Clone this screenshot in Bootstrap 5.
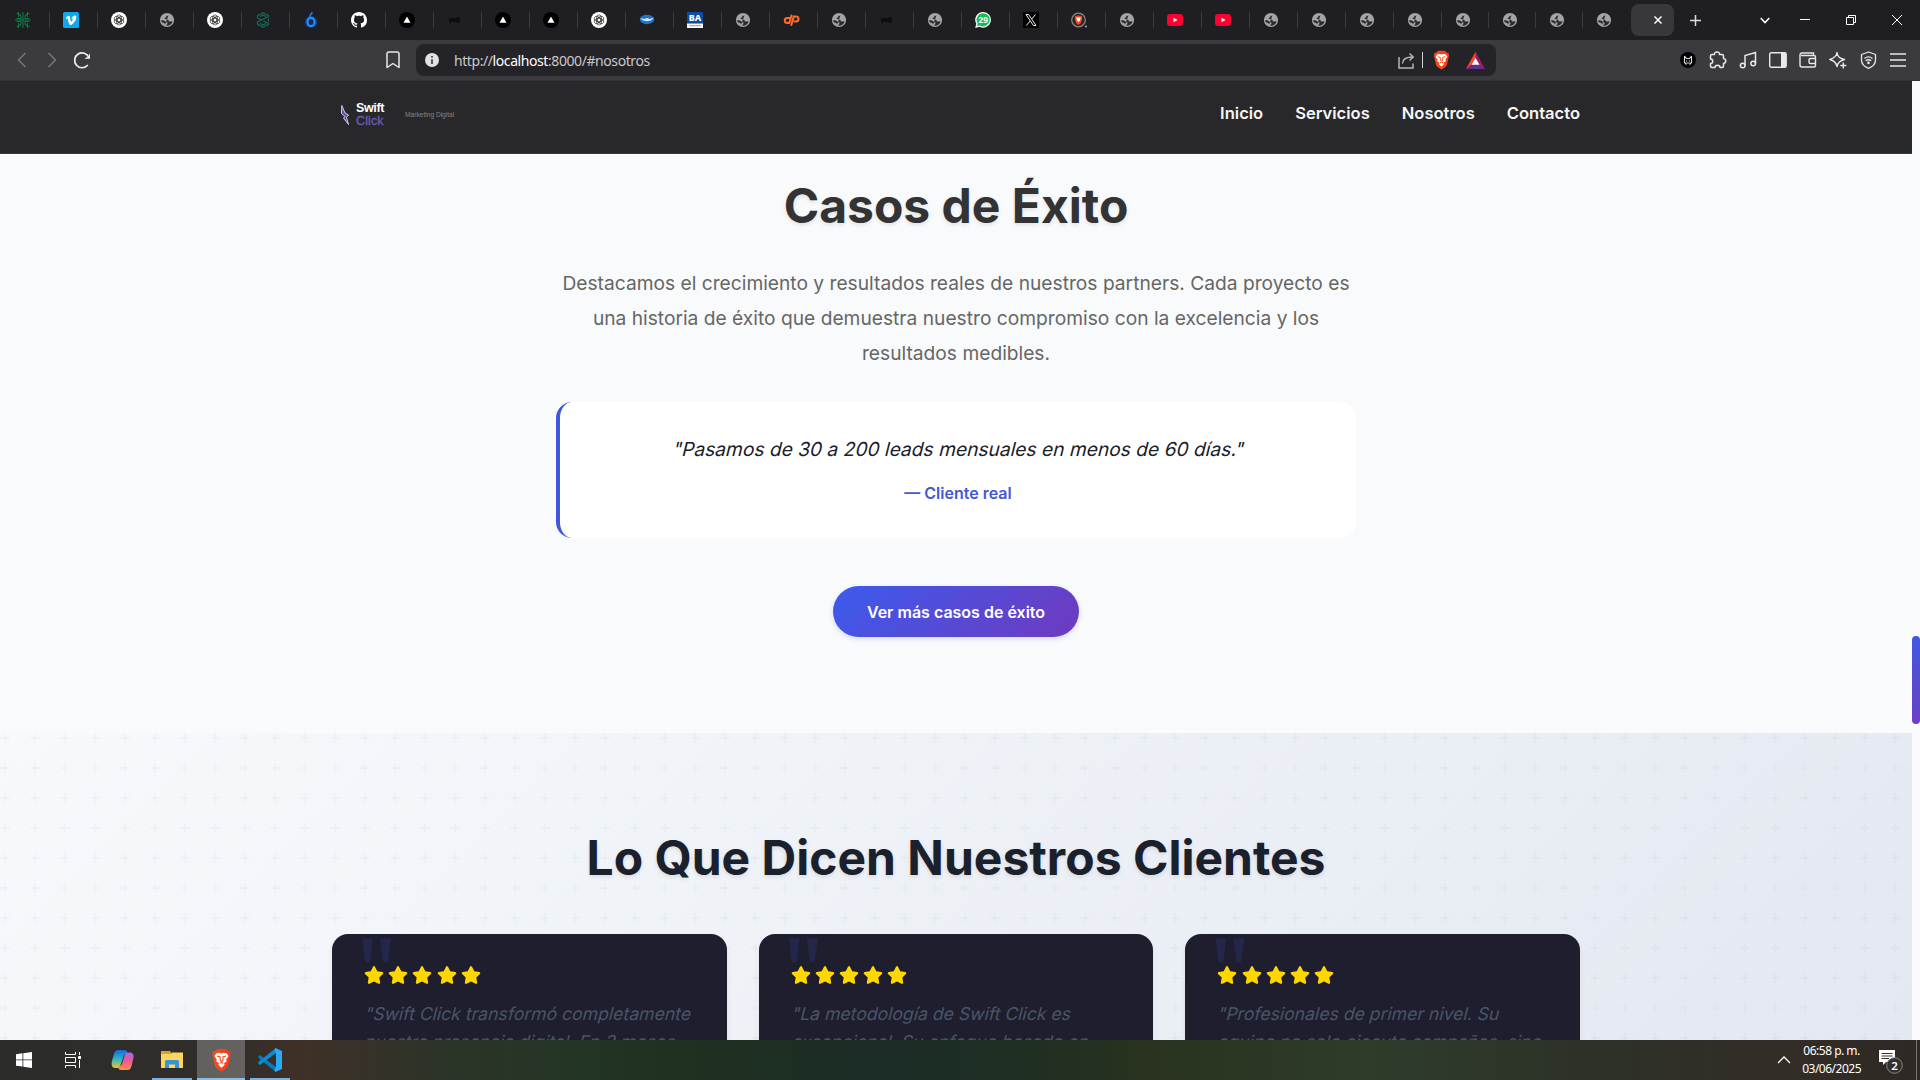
<!DOCTYPE html>
<html lang="es">
<head>
<meta charset="utf-8">
<title>Swift Click</title>
<link href="https://cdn.jsdelivr.net/npm/bootstrap@5.3.0/dist/css/bootstrap.min.css" rel="stylesheet">
<style>
body{width:1920px;height:1080px;overflow:hidden;font-family:Inter,sans-serif;background:#f8fafc}
svg{display:block;flex:none}
.tabstrip{height:40px;background:#1f1f23;padding-left:2px}
.tab-cell{width:48px;height:16px;padding-right:5px;border-right:1px solid #3a3a3e;flex:none}
.tab-cell.slim{width:47px}
.tab-cell.bare{border-color:transparent}
.tab-active{width:43px;height:32px;border-radius:8px;background:#38373c;padding-left:11px;margin-left:1px}
.win-ctl{width:46px}
.tab-list{margin-right:12px}
.toolbar{height:41px;background:#3b3a3f;border-bottom:1px solid #323236}
.tool-slot{width:30px}
.nav-tools{margin-left:7px}
.mark-slot{margin-left:281px}
.ext-tools{margin-right:7px}
.address{width:1080px;height:32px;margin-left:8px;border-radius:8px;background:#242328;font:14px "Noto Sans",sans-serif;letter-spacing:-.42px;color:#c9c9cc}
.address b{font-weight:400;color:#fff}
.info-dot{margin:0 15px 0 9px}
.addr-rule{margin:0 10px 0 7px}
.bat-icon{margin:0 11px 0 16px}
.site{height:959px}
.page{width:1912px;overflow:hidden}
.scroller{width:8px;padding-top:555px;background:#f8fafc}
.thumb{height:88px;border-radius:4px;background:linear-gradient(#4158e0,#6b3fc4)}
.site-head{height:73px;background:#28282a;border-bottom:1px solid #3c3c40;padding-bottom:8px}
.inner{width:1248px}
.brand{padding:3px 0 0 8px}
.brand-name{margin-left:6px;font:bold 12.5px/12.5px "Liberation Sans",sans-serif;color:#fff;letter-spacing:-.35px}
.brand-name span{color:#6c5db4;font-weight:400;letter-spacing:.1px;-webkit-text-stroke:.3px #6c5db4}
.brand-tag{font:6.6px/10px "Liberation Sans",sans-serif;color:#858588;margin-left:21px}
.site-nav{gap:32px;font-weight:600;color:#f5f5f5;font-size:16.56px}
.cases{height:579px;background:#f8fafb;padding-top:23px}
.big-title{font-size:48px;line-height:58px;font-weight:700;text-shadow:0 2px 4px rgba(0,0,0,.1)}
.cases .big-title{color:#333;margin-bottom:31px}
.intro{width:800px;font-size:19.2px;line-height:35px;color:#666;margin-bottom:31px}
.quote-box{width:800px;height:136px;border-left:4px solid #4056dd;border-radius:16px;background:#fff;padding-top:30px}
.quote-box p{font-size:19.2px;line-height:34px;color:#1a202c;margin-bottom:14px}
.slant{display:inline-block;transform:skewX(-14deg);transform-origin:0 70%}
.quote-box cite{font-style:normal;font-weight:600;color:#4657d4;line-height:26px}
.more-btn{width:246px;height:51px;margin-top:48px;border-radius:26px;font-weight:600;color:#fff;background:linear-gradient(135deg,#3b5bed,#6f3abf);box-shadow:0 2px 5px rgba(64,86,217,.2)}
.clients{height:307px;overflow:hidden;position:relative;background:linear-gradient(135deg,#f7fafc,#e3e8f1);padding-top:96px}
.crosses{position:absolute;inset:0}
.clients .big-title{color:#1a202c;margin-bottom:47px;position:relative}
.voices{gap:32px;position:relative}
.voice{flex:1;height:360px;border-radius:16px;background:#1e1e2e;padding:32px;position:relative;box-shadow:0 4px 6px rgba(0,0,0,.06)}
.voice::before{content:'"';position:absolute;left:25px;top:-12px;font:96px/96px "Liberation Serif",serif;color:#23274b;-webkit-text-stroke:1.5px #23274b}
.star-row{gap:4.2px;position:relative}
.voice p{font-size:17.6px;line-height:28.2px;color:#4a5568;margin:16px 0 0;white-space:nowrap}
.taskbar{height:40px;background:linear-gradient(90deg,#2c2d2a 0,#2f2d29 220px,#3f3027 300px,#2c3428 440px,#233525 580px,#1f2f20 700px,#1b2d27 880px,#202f22 1040px,#29331f 1150px,#2e3c2a 1370px,#2d3128 1600px,#332c26 1800px,#2e2925 1920px)}
.task-item{width:49px;height:40px}
.task-icon-left{margin-left:-2px}
.open-app{width:40px;margin-left:5px;box-shadow:inset 0 -2px #76b1e4}
.open-app.current{width:48px;background:rgba(255,255,255,.25);box-shadow:inset 0 -2px #86bdec}
.clock{font:12px/18px "Noto Sans",sans-serif;color:#fff;letter-spacing:-.5px}
.tray-up{margin-right:11px}
.notes{margin:0 13px 0 17px}
.desk-edge{margin-right:3px}
</style>
<script src="https://cdn.jsdelivr.net/npm/bootstrap@5.3.0/dist/js/bootstrap.bundle.min.js"></script>
</head>
<body>
<svg width="0" height="0" class="position-absolute">
<defs>
<linearGradient id="lionG" x1="0" x2="1"><stop offset="0" stop-color="#f4501f"/><stop offset="1" stop-color="#fb3a12"/></linearGradient>
<linearGradient id="coA" x1="0" y1="0" x2="0" y2="1"><stop offset="0" stop-color="#1b67d8"/><stop offset=".5" stop-color="#2bb6c9"/><stop offset="1" stop-color="#f2c230"/></linearGradient>
<linearGradient id="coB" x1="0" y1="0" x2="0" y2="1"><stop offset="0" stop-color="#b063e6"/><stop offset=".5" stop-color="#ec5a92"/><stop offset="1" stop-color="#fb923c"/></linearGradient>
<symbol id="globe" viewBox="0 0 16 16"><circle cx="8" cy="8" r="7.100" fill="#a2a4a7"/><path d="M9.800 2.300C9.800 3.600 8.900 3.700 7.800 4 7 4.300 7.400 5.300 6.500 5.700 5.500 6.100 5.200 6.800 6.200 7 8 7.300 9.300 7.300 9.500 8.500 9.700 9.600 10.500 9.400 11.300 9.400L13.600 9.200A5.800 5.800 0 0 1 7.300 13.700C7.300 12.500 8.600 12.400 8.500 11.200 8.400 9.900 6.800 10.200 5.900 9.200 5.300 8.400 4.300 8.300 2.200 8.300A5.900 5.900 0 0 0 2.600 10.200C4.500 10.200 5 11 5.800 11.800 6.300 12.400 5.800 13 5.800 13.400" fill="#2a2a2e"/></symbol>
<symbol id="gpt" viewBox="0 0 16 16"><circle cx="8" cy="8" r="8" fill="#fff"/><g fill="none" stroke="#3c3c3c" stroke-width=".75"><rect x="5.700" y="2.900" width="4.600" height="7.200" rx="2.300"/><rect x="5.700" y="2.900" width="4.600" height="7.200" rx="2.300" transform="rotate(60 8 8)"/><rect x="5.700" y="2.900" width="4.600" height="7.200" rx="2.300" transform="rotate(120 8 8)"/><rect x="5.700" y="2.900" width="4.600" height="7.200" rx="2.300" transform="rotate(180 8 8)"/><rect x="5.700" y="2.900" width="4.600" height="7.200" rx="2.300" transform="rotate(240 8 8)"/><rect x="5.700" y="2.900" width="4.600" height="7.200" rx="2.300" transform="rotate(300 8 8)"/></g></symbol>
<symbol id="vercel" viewBox="0 0 16 16"><circle cx="8" cy="8" r="8" fill="#000"/><path d="M8 4.500 11.500 10.800H4.500Z" fill="#fff"/></symbol>
<symbol id="yt" viewBox="0 0 16 16"><rect y="2" width="16" height="12" rx="3" fill="#ff0033"/><path d="M6.500 5.800 10.500 8 6.500 10.200Z" fill="#fff"/></symbol>
<symbol id="dim" viewBox="0 0 16 16"><path d="M2 6 3.500 10 5 6M6 10V6L7.500 9 9 6V10M13 6H10.500V10H13M10.500 8H13" fill="none" stroke="#0d0d0f" stroke-width="1.500"/></symbol>
<symbol id="lion" viewBox="0 0 20 24"><path d="M6 1H14L16 3 18.500 3.500 19 7 18.500 9 16.500 18C16 20 12 22 10 23.500 8 22 4 20 3.500 18L1.500 9 1 7 1.500 3.500 4 3Z" fill="url(#lionG)"/><path d="M5 5.200 8 4.800 10 5.400 12 4.800 15 5.200 17 8 14.700 11.500 15.200 13.500 12.600 15 13 17 10 19.800 7 17 7.400 15 4.800 13.500 5.300 11.500 3 8Z" fill="#fff"/><path d="M5.500 8 8.600 9V12.500L10 13.300 11.400 12.500V9L14.500 8M8.200 15.300 10 14.500 11.800 15.300" fill="none" stroke="#fa4218" stroke-width="1.100"/></symbol>
<symbol id="star" viewBox="0 0 576 512"><path fill="#ffd700" d="M259.300 17.800 194 150.200 47.900 171.500c-26.200 3.800-36.700 36.100-17.700 54.600l105.700 103-25 145.500c-4.500 26.300 23.200 46 46.400 33.700L288 439.600l130.700 68.700c23.200 12.200 50.900-7.400 46.400-33.700l-25-145.500 105.700-103c19-18.500 8.500-50.800-17.700-54.600L382 150.200 316.700 17.800c-11.700-23.600-45.600-23.900-57.400 0z"/></symbol>
</defs></svg>

<div class="tabstrip d-flex align-items-center">
<div class="tab-cell d-flex align-items-center justify-content-center"><svg width="16" height="16" viewBox="0 0 16 16" fill="none" stroke="#0c7a41" stroke-width="1.100"><path d="M8 0V16M1.500 1.500H3.500L6 4V6.500H1.500M14.500 1.500H12.500L10 4V6.500H14.500M0 8H16M1.500 14.500H3.500L6 12V9.500H1.500M14.500 14.500H12.500L10 12V9.500H14.500M3.500 0V5M12.500 0V5M3.500 16V11M12.500 16V11"/></svg></div>
<div class="tab-cell d-flex align-items-center justify-content-center"><svg width="16" height="16" viewBox="0 0 16 16"><rect width="16" height="16" rx="1.500" fill="#10a8ea"/><path d="M2.700 6C4.600 4 6.500 2.600 7 5.500 7.300 8 7.600 9.500 8.200 9.500 8.900 9.500 10.400 7 9.300 6.500L8.500 6.700C9 3.500 13.600 2 13.300 5.500 13 8.500 9.800 12.800 7.700 12.900 5.500 12.900 5.300 7.200 4.400 6.400L3.200 6.800Z" fill="#fff"/></svg></div>
<div class="tab-cell d-flex align-items-center justify-content-center"><svg width="16" height="16"><use href="#gpt"/></svg></div>
<div class="tab-cell d-flex align-items-center justify-content-center"><svg width="16" height="16"><use href="#globe"/></svg></div>
<div class="tab-cell d-flex align-items-center justify-content-center"><svg width="16" height="16"><use href="#gpt"/></svg></div>
<div class="tab-cell d-flex align-items-center justify-content-center"><svg width="16" height="16" viewBox="0 0 16 16" fill="none" stroke="#127358" stroke-width="1.200"><path d="M13.500 4.500V3.500L8 .8 2.500 3.500V6L13.500 11.500V12.500L8 15.200 2.500 12.500V11.500M13.500 4.500 2.500 10V11.500M5 4.500 8 3 11 4.500M5 11.500 8 13 11 11.500M13.500 6.500V9.500"/></svg></div>
<div class="tab-cell d-flex align-items-center justify-content-center"><svg width="16" height="16" viewBox="0 0 16 16"><circle cx="8" cy="10" r="6" fill="#0847a8"/><ellipse cx="8" cy="10" rx="3.500" ry="4" fill="#102c66" stroke="#2a9af5" stroke-width="1.800"/><path d="M6.500 6C7 3 8 1.500 9.500.5" stroke="#1478d4" stroke-width="2" fill="none"/></svg></div>
<div class="tab-cell d-flex align-items-center justify-content-center"><svg width="16" height="16" viewBox="0 0 16 16"><path fill="#fff" d="M8 0C3.580 0 0 3.580 0 8c0 3.540 2.290 6.530 5.470 7.590.4.070.55-.17.55-.38 0-.19-.01-.82-.01-1.490-2.010.37-2.530-.49-2.690-.94-.09-.23-.48-.94-.82-1.130-.28-.15-.68-.52-.01-.53.63-.01 1.080.58 1.230.82.72 1.210 1.870.87 2.330.66.070-.52.28-.87.51-1.070-1.780-.2-3.640-.89-3.640-3.950 0-.87.31-1.590.82-2.150-.08-.2-.36-1.020.08-2.120 0 0 .67-.21 2.200.82.640-.18 1.320-.27 2-.27s1.360.09 2 .27c1.530-1.040 2.200-.82 2.200-.82.440 1.100.16 1.920.08 2.120.51.56.82 1.270.82 2.150 0 3.070-1.870 3.750-3.650 3.950.29.25.54.73.54 1.480 0 1.070-.01 1.930-.01 2.200 0 .21.15.46.55.38A8 8 0 0 0 16 8c0-4.420-3.580-8-8-8"/></svg></div>
<div class="tab-cell d-flex align-items-center justify-content-center"><svg width="16" height="16"><use href="#vercel"/></svg></div>
<div class="tab-cell d-flex align-items-center justify-content-center"><svg width="16" height="16"><use href="#dim"/></svg></div>
<div class="tab-cell d-flex align-items-center justify-content-center"><svg width="16" height="16"><use href="#vercel"/></svg></div>
<div class="tab-cell d-flex align-items-center justify-content-center"><svg width="16" height="16"><use href="#vercel"/></svg></div>
<div class="tab-cell d-flex align-items-center justify-content-center"><svg width="16" height="16"><use href="#gpt"/></svg></div>
<div class="tab-cell d-flex align-items-center justify-content-center"><svg width="16" height="16" viewBox="0 0 16 16"><ellipse cx="8" cy="7.500" rx="7.200" ry="4.700" fill="#1f74c8"/><path d="M1 6 5 7 8 6 11 7 15 5.500 12 8.500 8 9.200 4 8.500Z" fill="#d6eafa"/></svg></div>
<div class="tab-cell d-flex align-items-center justify-content-center"><svg width="16" height="16" viewBox="0 0 16 16"><rect width="16" height="11.500" fill="#0a4da2"/><rect y="11.500" width="16" height="4.500" fill="#fff"/><path d="M2 13.700H14" stroke="#7a9fcc"/><text x="8" y="9" text-anchor="middle" font-family="Noto Sans" font-weight="800" font-size="9" fill="#fff">BA</text></svg></div>
<div class="tab-cell d-flex align-items-center justify-content-center"><svg width="16" height="16"><use href="#globe"/></svg></div>
<div class="tab-cell d-flex align-items-center justify-content-center"><svg width="17" height="16" viewBox="0 0 17 16" fill="none" stroke="#ff6a2b" stroke-width="2.100" stroke-linecap="round"><path d="M6.500 6H4.300A2.500 2.500 0 0 0 4.300 11H6.200L8.500 3.500M8.300 13 10.800 4.500H13A2.500 2.500 0 0 1 13 9.500H11.700"/></svg></div>
<div class="tab-cell d-flex align-items-center justify-content-center"><svg width="16" height="16"><use href="#globe"/></svg></div>
<div class="tab-cell d-flex align-items-center justify-content-center"><svg width="16" height="16"><use href="#dim"/></svg></div>
<div class="tab-cell d-flex align-items-center justify-content-center"><svg width="16" height="16"><use href="#globe"/></svg></div>
<div class="tab-cell d-flex align-items-center justify-content-center"><svg width="16" height="16" viewBox="0 0 16 16"><path d="M8.200 0A7.800 7.800 0 1 1 4.500 14.700L.2 16 1.300 11.700A7.800 7.800 0 0 1 8.200 0Z" fill="#fff"/><path d="M8.200 1.200A6.600 6.600 0 1 1 4.700 13.400L2 14.200 2.700 11.500A6.600 6.600 0 0 1 8.200 1.200Z" fill="#19bd54"/><text x="8.200" y="11" text-anchor="middle" font-family="Liberation Sans" font-size="8.500" font-weight="700" fill="#fff">29</text></svg></div>
<div class="tab-cell d-flex align-items-center justify-content-center"><svg width="16" height="16" viewBox="0 0 16 16"><rect width="16" height="16" fill="#000"/><path d="M3 2.500H5.600L13 13.500H10.400ZM12.500 2.500 8.700 7M7.200 9 3.300 13.500" fill="none" stroke="#eee"/></svg></div>
<div class="tab-cell d-flex align-items-center justify-content-center"><svg width="16" height="16" viewBox="0 0 16 16"><circle cx="7.500" cy="8" r="6.800" fill="#2a2422" stroke="#8b8581" stroke-width="1.300"/><path d="M4 4 7.500 3.500 11 4 11.200 7 10 11 7.500 13 5 11 3.800 7Z" fill="#ee4528"/><path d="M5.200 5.500H9.800L9 8.500 7.500 10 6 8.500Z" fill="#fff"/><circle cx="15" cy="14.500" r="1" fill="#aaa"/></svg></div>
<div class="tab-cell d-flex align-items-center justify-content-center"><svg width="16" height="16"><use href="#globe"/></svg></div>
<div class="tab-cell d-flex align-items-center justify-content-center"><svg width="16" height="16"><use href="#yt"/></svg></div>
<div class="tab-cell d-flex align-items-center justify-content-center"><svg width="16" height="16"><use href="#yt"/></svg></div>
<div class="tab-cell d-flex align-items-center justify-content-center"><svg width="16" height="16"><use href="#globe"/></svg></div>
<div class="tab-cell d-flex align-items-center justify-content-center"><svg width="16" height="16"><use href="#globe"/></svg></div>
<div class="tab-cell d-flex align-items-center justify-content-center"><svg width="16" height="16"><use href="#globe"/></svg></div>
<div class="tab-cell d-flex align-items-center justify-content-center"><svg width="16" height="16"><use href="#globe"/></svg></div>
<div class="tab-cell slim d-flex align-items-center justify-content-center"><svg width="16" height="16"><use href="#globe"/></svg></div>
<div class="tab-cell slim d-flex align-items-center justify-content-center"><svg width="16" height="16"><use href="#globe"/></svg></div>
<div class="tab-cell slim d-flex align-items-center justify-content-center"><svg width="16" height="16"><use href="#globe"/></svg></div>
<div class="tab-cell slim bare d-flex align-items-center justify-content-center"><svg width="16" height="16"><use href="#globe"/></svg></div>
<div class="tab-active d-flex align-items-center justify-content-center"><svg width="8" height="8" stroke="#fff" stroke-width="1.500"><path d="M.5.5 7.500 7.500M7.500.5.5 7.500"/></svg></div>
<svg class="ms-3" width="11" height="11" stroke="#ddd" stroke-width="1.500"><path d="M5.500 0V11M0 5.500H11"/></svg>
<div class="ms-auto d-flex align-items-center">
<svg class="tab-list" width="10" height="7" fill="none" stroke="#fff" stroke-width="1.600"><path d="M.7 1 5 5.500 9.300 1"/></svg>
<div class="win-ctl d-flex justify-content-center align-items-center"><svg width="10" height="10" stroke="#fff"><path d="M0 4.500H10"/></svg></div>
<div class="win-ctl d-flex justify-content-center"><svg width="10" height="10" fill="none" stroke="#fff"><path d="M.5 2.500H7.500V9.500H.5ZM2.500 2.500V.5H9.500V7.500H7.500"/></svg></div>
<div class="win-ctl d-flex justify-content-center"><svg width="10" height="10" stroke="#fff"><path d="M0 0 10 10M10 0 0 10"/></svg></div>
</div>
</div>

<div class="toolbar d-flex align-items-center">
<div class="nav-tools d-flex align-items-center">
<div class="tool-slot d-flex justify-content-center"><svg width="10" height="16" fill="none" stroke="#77767b" stroke-width="1.500"><path d="M8.500 1 1.500 8 8.500 15"/></svg></div>
<div class="tool-slot d-flex justify-content-center"><svg width="10" height="16" fill="none" stroke="#77767b" stroke-width="1.500"><path d="M1.500 1 8.500 8 1.500 15"/></svg></div>
<div class="tool-slot d-flex justify-content-center"><svg width="18" height="18" fill="none" stroke="#f0f0f0" stroke-width="1.700"><path d="M14.800 14A7.400 7.400 0 1 1 15.900 6.500"/><path d="M17 2V7.800H11.500L13 6.500 15 6Z" fill="#f0f0f0" stroke="none"/></svg></div>
</div>
<div class="mark-slot tool-slot d-flex justify-content-center"><svg width="14" height="18" fill="none" stroke="#e8e8ea" stroke-width="1.500"><path d="M1 3A1.800 1.800 0 0 1 2.800 1H11.200A1.800 1.800 0 0 1 13 3V16.500L7 12.500 1 16.500Z" stroke-linejoin="round"/></svg></div>
<div class="address d-flex align-items-center">
<svg class="info-dot" width="14" height="14"><circle cx="7" cy="7" r="7" fill="#e2e2e4"/><path d="M7 3V4.800M7 6.200V11" stroke="#333" stroke-width="1.600"/></svg>
<span>http://<b>localhost</b>:8000/#nosotros</span>
<div class="ms-auto d-flex align-items-center">
<svg width="17" height="17" fill="none" stroke="#b5b5b8" stroke-width="1.500"><path d="M1 5V16H15V11.500M4.500 11.500C4.500 7 8 5 15 5M11.500 1.500 15.200 5 11.500 8.500"/></svg>
<svg class="addr-rule" width="1" height="16"><rect width="1" height="16" fill="#d0d0d2"/></svg>
<svg width="17" height="20"><use href="#lion"/></svg>
<svg class="bat-icon" width="19" height="17" viewBox="0 0 19 17"><path d="M9.500 0 19 17H0Z" fill="#9e1f63"/><path d="M9.500 0V6L5.500 12.500 0 17Z" fill="#ff4724"/><path d="M0 17 5.500 12.500H13.500L19 17Z" fill="#662d91"/><path d="M9.500 6 13.500 12.700H5.500Z" fill="#fff"/></svg>
</div>
</div>
<div class="ext-tools ms-auto d-flex align-items-center">
<div class="tool-slot d-flex justify-content-center"><svg width="16" height="16"><circle cx="8" cy="8" r="8" fill="#000"/><path d="M4.500 4V10.500L6.500 12.500M11.500 4V10.500L9.500 12.500M4.500 4 6.500 6.500H9.500L11.500 4M6 9H7.200M8.800 9H10M6.500 11H9.500" fill="none" stroke="#ddd" stroke-width="1.100"/></svg></div>
<div class="tool-slot d-flex justify-content-center"><svg width="18" height="18" fill="none" stroke="#e8e8ea" stroke-width="1.500"><path d="M1.500 5A1.500 1.500 0 0 1 3 3.500H5.500C5 0 11 0 10.500 3.500H13A1.500 1.500 0 0 1 14.500 5V7.500C17.500 8 17.500 12 14.500 12.500V15A1.500 1.500 0 0 1 13 16.500H11C11 13.500 6 13.500 6 16.500H3A1.500 1.500 0 0 1 1.500 15V12.500C4.500 12.500 4.500 8 1.500 8Z" stroke-linejoin="round"/></svg></div>
<div class="tool-slot d-flex justify-content-center"><svg width="18" height="18" fill="none" stroke="#e8e8ea" stroke-width="1.500"><path d="M6 14.500V4.500L16.500 1.500V12.500"/><circle cx="3.700" cy="14.500" r="2.300"/><circle cx="14.200" cy="12.500" r="2.300"/></svg></div>
<div class="tool-slot d-flex justify-content-center"><svg width="18" height="16"><rect x=".7" y=".7" width="16.500" height="14.500" rx="1.500" fill="none" stroke="#e8e8ea" stroke-width="1.400"/><path d="M12 1H17V15H12Z" fill="#e8e8ea"/></svg></div>
<div class="tool-slot d-flex justify-content-center"><svg width="18" height="16" fill="none" stroke="#e8e8ea" stroke-width="1.400"><path d="M14.500 3.500V1H3A2 2 0 0 0 1 3V13A2 2 0 0 0 3 15H15A1.500 1.500 0 0 0 16.500 13.500V5A1.500 1.500 0 0 0 15 3.500H2M16.500 6.500H11.500A1.500 1.500 0 0 0 10 8V10A1.500 1.500 0 0 0 11.500 11.500H16.500"/></svg></div>
<div class="tool-slot d-flex justify-content-center"><svg width="18" height="18" fill="none" stroke="#e8e8ea" stroke-width="1.400"><path d="M8 1.500C8.500 5.500 10 7 15.500 8.500 11 9.500 9 11 8 15.500 7 11 5 9.500 .8 8.500 5.500 7 7.500 5.500 8 1.500Z" stroke-linejoin="round"/><path d="M14.300 11.500V17.500M11.300 14.500H17.300"/></svg></div>
<div class="tool-slot d-flex justify-content-center"><svg width="17" height="18" fill="none" stroke="#e8e8ea" stroke-width="1.300"><path d="M8.500 1 15.500 3.500V9C15.500 13 12 16 8.500 17.300 5 16 1.500 13 1.500 9V3.500Z" stroke-linejoin="round"/><path d="M4.500 7.500C7 5.500 10 5.500 12.500 7.500M5.700 9.800C7.500 8.400 9.500 8.400 11.300 9.800"/><circle cx="8.500" cy="11.800" r=".7"/></svg></div>
<div class="tool-slot d-flex justify-content-center"><svg width="18" height="14" stroke="#e8e8ea" stroke-width="1.500"><path d="M1 1H17M1 7H17M1 13H17"/></svg></div>
</div>
</div>

<div class="site d-flex">
<main class="page">
<header class="site-head d-flex align-items-center">
<div class="inner mx-auto d-flex align-items-center justify-content-between">
<div class="brand d-flex align-items-center">
<svg width="10" height="22" viewBox="0 0 10 22"><path d="M1.800 1.500 1.500 9.500 5 12.500 3.500 14 8.500 20.500 6.500 13.500 8.500 11 5 9Z" fill="#5d5299" stroke="#d4d0e8"/></svg>
<div class="brand-name d-flex flex-column">Swift<span>Click</span></div>
<div class="brand-tag">Marketing Digital</div>
</div>
<nav class="site-nav d-flex"><span>Inicio</span><span>Servicios</span><span>Nosotros</span><span>Contacto</span></nav>
</div>
</header>
<section class="cases text-center d-flex flex-column align-items-center">
<h2 class="big-title">Casos de Éxito</h2>
<p class="intro">Destacamos el crecimiento y resultados reales de nuestros partners. Cada proyecto es una historia de éxito que demuestra nuestro compromiso con la excelencia y los resultados medibles.</p>
<div class="quote-box"><p><span class="slant">"Pasamos de 30 a 200 leads mensuales en menos de 60 días."</span></p><cite class="d-block">— Cliente real</cite></div>
<a class="more-btn d-flex align-items-center justify-content-center text-decoration-none">Ver más casos de éxito</a>
</section>
<section class="clients">
<svg class="crosses" width="1912" height="307"><defs><pattern id="plus" width="30" height="30" patternUnits="userSpaceOnUse"><path d="M5 .5V9.500M.5 5H9.500" stroke="#64748b" stroke-opacity=".065" stroke-width="1.400"/></pattern></defs><rect width="1912" height="307" fill="url(#plus)"/></svg>
<h2 class="big-title text-center">Lo Que Dicen Nuestros Clientes</h2>
<div class="voices inner mx-auto d-flex">
<article class="voice"><div class="star-row d-flex"><svg width="20" height="18"><use href="#star"/></svg><svg width="20" height="18"><use href="#star"/></svg><svg width="20" height="18"><use href="#star"/></svg><svg width="20" height="18"><use href="#star"/></svg><svg width="20" height="18"><use href="#star"/></svg></div><p><span class="slant">"Swift Click transformó completamente</span><br><span class="slant">nuestra presencia digital. En 3 meses</span></p></article>
<article class="voice"><div class="star-row d-flex"><svg width="20" height="18"><use href="#star"/></svg><svg width="20" height="18"><use href="#star"/></svg><svg width="20" height="18"><use href="#star"/></svg><svg width="20" height="18"><use href="#star"/></svg><svg width="20" height="18"><use href="#star"/></svg></div><p><span class="slant">"La metodología de Swift Click es</span><br><span class="slant">excepcional. Su enfoque basado en</span></p></article>
<article class="voice"><div class="star-row d-flex"><svg width="20" height="18"><use href="#star"/></svg><svg width="20" height="18"><use href="#star"/></svg><svg width="20" height="18"><use href="#star"/></svg><svg width="20" height="18"><use href="#star"/></svg><svg width="20" height="18"><use href="#star"/></svg></div><p><span class="slant">"Profesionales de primer nivel. Su</span><br><span class="slant">equipo no solo ejecuta campañas, sino</span></p></article>
</div>
</section>
</main>
<div class="scroller"><div class="thumb"></div></div>
</div>

<footer class="taskbar d-flex align-items-center">
<div class="task-item d-flex align-items-center justify-content-center"><svg class="task-icon-left" width="16" height="16" fill="#fff"><path d="M0 2.200 6.500 1.300V7.500H0ZM7.300 1.200 16 0V7.500H7.300ZM0 8.300H6.500V14.600L0 13.700ZM7.300 8.300H16V16L7.300 14.800Z"/></svg></div>
<div class="task-item d-flex align-items-center justify-content-center"><svg class="task-icon-left" width="16" height="16" fill="none" stroke="#fff"><path d="M.5 0V2.500H10.500V0M.5 5.500H10.500V10.500H.5ZM.5 16V13.500H10.500V16M14.500 0V3M14.500 8V16"/><path d="M13.500 4.500H16V6.500H13.500Z" fill="#fff"/></svg></div>
<div class="task-item d-flex align-items-center justify-content-center"><svg width="23" height="22" viewBox="0 0 23 22"><path d="M7 1H13.500C15.500 1 16 2 16.500 4L13 6 9 17.500C8.500 18.500 7.500 19 6 19H4C1 19 0 16 1 12L3 5C4 2 5 1 7 1Z" fill="url(#coA)"/><path d="M16.500 21H10C8 21 7.500 20 7 18L10.500 16 14 5.500C14.500 4 16 3.500 17 3.500H19C22 3.500 23 6 22.500 9L20.500 17C19.500 20 18.500 21 16.500 21Z" fill="url(#coB)"/></svg></div>
<div class="open-app d-flex align-items-center justify-content-center align-self-stretch"><svg width="22" height="20" viewBox="0 0 22 20"><path d="M0 1H9L10.500 3V5H0Z" fill="#d9a321"/><path d="M0 4H10L11 2.500H22V18H0Z" fill="#fcd462"/><path d="M4 18V11.500A1.500 1.500 0 0 1 5.500 10H16.500A1.500 1.500 0 0 1 18 11.500V18H14V14.500H8V18Z" fill="#3b93d4"/></svg></div>
<div class="open-app current d-flex align-items-center justify-content-center align-self-stretch"><svg width="21" height="24"><use href="#lion"/></svg></div>
<div class="open-app d-flex align-items-center justify-content-center align-self-stretch"><svg width="24" height="24" viewBox="0 0 24 24"><path d="M0 8.500 2 7 18 19V24L1 10.500Z" fill="#0a79bd"/><path d="M0 15.500 2 17 18 5V0L1 13.500Z" fill="#0f8bd2"/><path d="M17.500 0 24 3V21L17.500 24 16.500 22.500 18 18V6L16.500 1.500Z" fill="#2aaaf3"/></svg></div>
<div class="ms-auto d-flex align-items-center">
<svg class="tray-up" width="14" height="8" fill="none" stroke="#fff" stroke-width="1.300"><path d="M1 7 7 1 13 7"/></svg>
<div class="clock text-center">06:58 p. m.<br>03/06/2025</div>
<svg class="notes" width="25" height="28" viewBox="0 0 25 28"><path d="M1 4H17V16H8L5 19V16H1Z" fill="#fff"/><path d="M3.500 7.500H14.500M3.500 10H14.500M3.500 12.500H11" stroke="#333"/><circle cx="16.500" cy="19.500" r="7.800" fill="#33312e" stroke="#8a8885"/><text x="16.500" y="23.700" text-anchor="middle" font-family="Noto Sans" font-weight="600" font-size="11.500" fill="#fff">2</text></svg>
<svg class="desk-edge" width="1" height="40"><rect width="1" height="40" fill="#77736e"/></svg>
</div>
</footer>
</body>
</html>
